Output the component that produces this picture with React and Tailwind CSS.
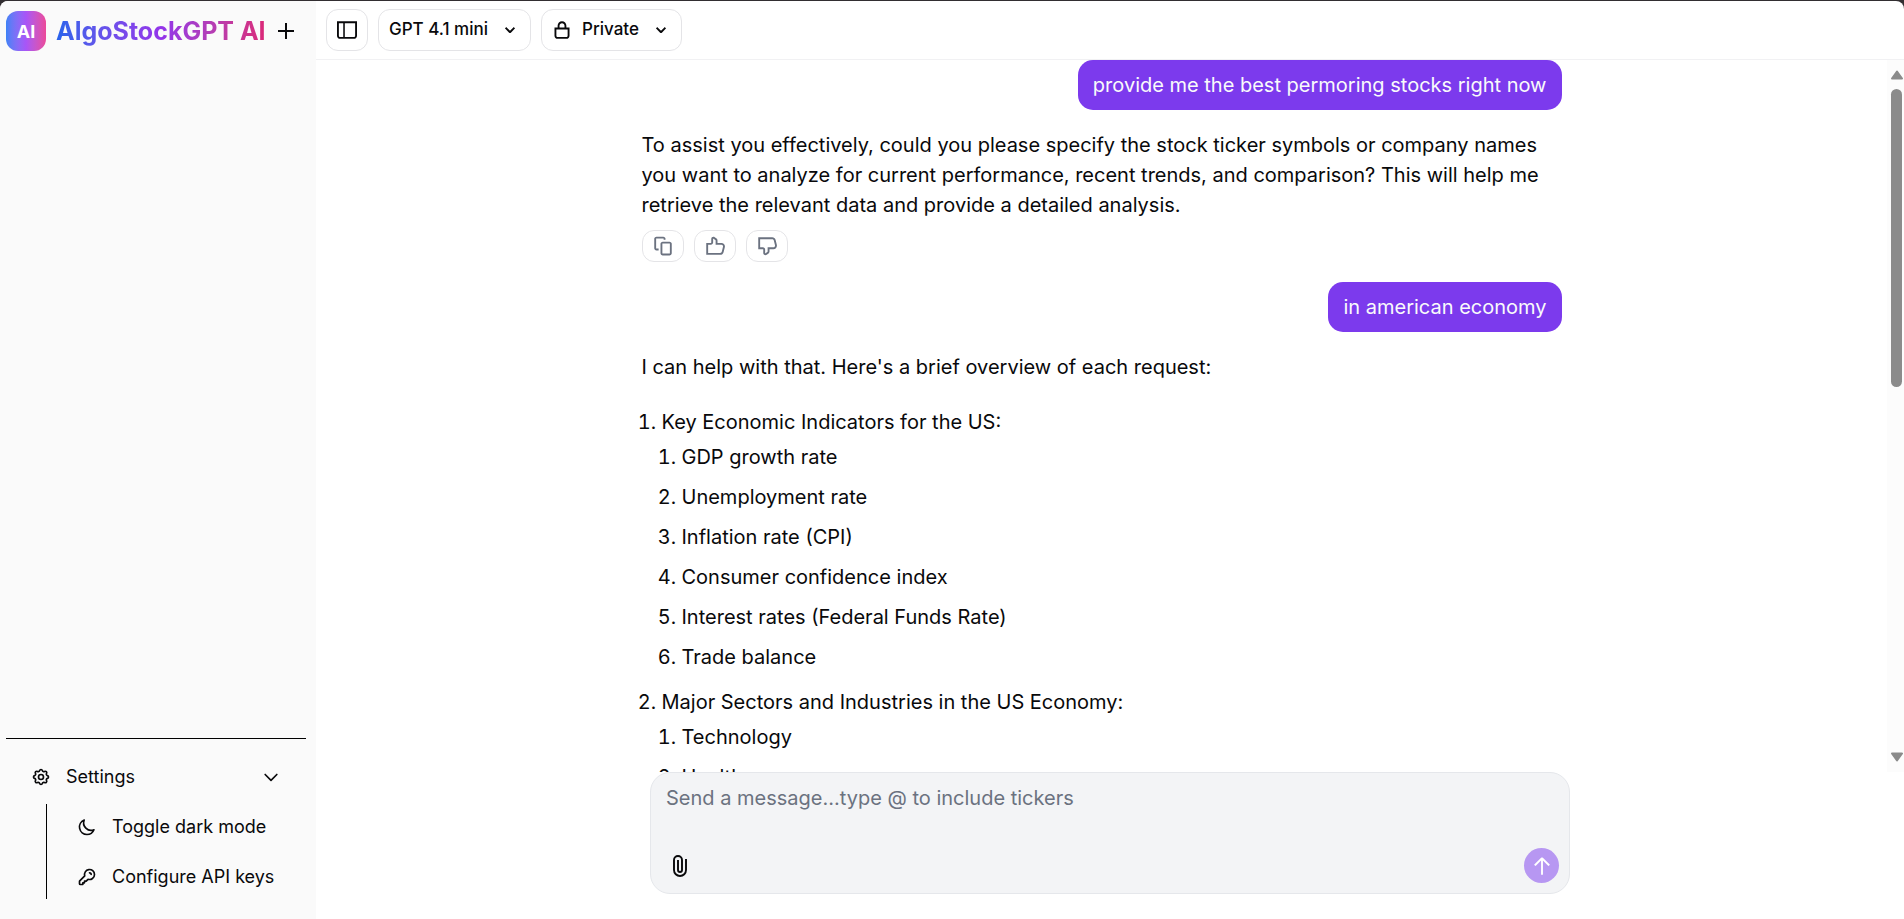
import { HiOutlineChevronDown, HiOutlineKey, HiOutlineMoon, HiOutlineCog } from "react-icons/hi";

function Glyph({ d, className }) {
  return (
    <svg viewBox="0 0 16 16" fill="currentColor" aria-hidden="true" className={className}>
      <path fillRule="evenodd" clipRule="evenodd" d={d} />
    </svg>
  );
}

const icons = {
  panel:
    "M6.245 2.5H14.5V12.5C14.5 13.0523 14.0523 13.5 13.5 13.5H6.245V2.5ZM4.995 2.5H1.5V12.5C1.5 13.0523 1.94772 13.5 2.5 13.5H4.995V2.5ZM0 1H1.5H14.5H16V2.5V12.5C16 13.8807 14.8807 15 13.5 15H2.5C1.11929 15 0 13.8807 0 12.5V2.5V1Z",
  lock:
    "M10 4.5V6H6V4.5C6 3.39543 6.89543 2.5 8 2.5C9.10457 2.5 10 3.39543 10 4.5ZM4.5 6V4.5C4.5 2.567 6.067 1 8 1C9.933 1 11.5 2.567 11.5 4.5V6H12.5H14V7.5V12.5C14 13.8807 12.8807 15 11.5 15H4.5C3.11929 15 2 13.8807 2 12.5V7.5V6H3.5H4.5ZM11.5 7.5H10H6H4.5H3.5V12.5C3.5 13.0523 3.94772 13.5 4.5 13.5H11.5C12.0523 13.5 12.5 13.0523 12.5 12.5V7.5H11.5Z",
  chevron:
    "M12.0607 6.74999L11.5303 7.28032L8.7071 10.1035C8.31657 10.4941 7.68341 10.4941 7.29288 10.1035L4.46966 7.28032L3.93933 6.74999L4.99999 5.68933L5.53032 6.21966L7.99999 8.68933L10.4697 6.21966L11 5.68933L12.0607 6.74999Z",
  copy:
    "M2.75 0.5C1.7835 0.5 1 1.2835 1 2.25V9.75C1 10.7165 1.7835 11.5 2.75 11.5H3.75H4.5V10H3.75H2.75C2.61193 10 2.5 9.88807 2.5 9.75V2.25C2.5 2.11193 2.61193 2 2.75 2H8.25C8.38807 2 8.5 2.11193 8.5 2.25V3H10V2.25C10 1.2835 9.2165 0.5 8.25 0.5H2.75ZM7.75 4.5C6.7835 4.5 6 5.2835 6 6.25V13.75C6 14.7165 6.7835 15.5 7.75 15.5H13.25C14.2165 15.5 15 14.7165 15 13.75V6.25C15 5.2835 14.2165 4.5 13.25 4.5H7.75ZM7.5 6.25C7.5 6.11193 7.61193 6 7.75 6H13.25C13.3881 6 13.5 6.11193 13.5 6.25V13.75C13.5 13.8881 13.3881 14 13.25 14H7.75C7.61193 14 7.5 13.8881 7.5 13.75V6.25Z",
  up:
    "M6.89531 2.23972C6.72984 2.12153 6.5 2.23981 6.5 2.44315V5.25001C6.5 6.21651 5.7165 7.00001 4.75 7.00001H2.5V13.5H12.1884C12.762 13.5 13.262 13.1096 13.4011 12.5532L14.4011 8.55318C14.5984 7.76425 14.0017 7.00001 13.1884 7.00001H9.25H8.5V6.25001V3.51458C8.5 3.43384 8.46101 3.35807 8.39531 3.31114L6.89531 2.23972ZM5 2.44315C5 1.01975 6.6089 0.191779 7.76717 1.01912L9.26717 2.09054C9.72706 2.41904 10 2.94941 10 3.51458V5.50001H13.1884C14.9775 5.50001 16.2903 7.18133 15.8563 8.91698L14.8563 12.917C14.5503 14.1412 13.4503 15 12.1884 15H1.75H1V14.25V6.25001V5.50001H1.75H4.75C4.88807 5.50001 5 5.38808 5 5.25001V2.44315Z",
  down:
    "M6.89531 13.7603C6.72984 13.8785 6.5 13.7602 6.5 13.5569V10.75C6.5 9.7835 5.7165 9 4.75 9H2.5V2.5H12.1884C12.762 2.5 13.262 2.89037 13.4011 3.44683L14.4011 7.44683C14.5984 8.23576 14.0017 9 13.1884 9H9.25H8.5V9.75V12.4854C8.5 12.5662 8.46101 12.6419 8.39531 12.6889L6.89531 13.7603ZM5 13.5569C5 14.9803 6.6089 15.8082 7.76717 14.9809L9.26717 13.9095C9.72706 13.581 10 13.0506 10 12.4854V10.5H13.1884C14.9775 10.5 16.2903 8.81868 15.8563 7.08303L14.8563 3.08303C14.5503 1.85882 13.4503 1 12.1884 1H1.75H1V1.75V9.75V10.5H1.75H4.75C4.88807 10.5 5 10.6119 5 10.75V13.5569Z",
  send:
    "M8.70711 1.39644C8.31659 1.00592 7.68342 1.00592 7.2929 1.39644L2.21968 6.46966L1.68935 6.99999L2.75001 8.06065L3.28034 7.53032L7.25001 3.56065V14.25V15H8.75001V14.25V3.56065L12.7197 7.53032L13.25 8.06065L14.3107 6.99999L13.7803 6.46966L8.70711 1.39644Z",
};

const sections = [
  {
    title: "Key Economic Indicators for the US:",
    items: [
      "GDP growth rate",
      "Unemployment rate",
      "Inflation rate (CPI)",
      "Consumer confidence index",
      "Interest rates (Federal Funds Rate)",
      "Trade balance",
    ],
  },
  {
    title: "Major Sectors and Industries in the US Economy:",
    items: ["Technology", "Healthcare"],
  },
];

function Sidebar() {
  return (
    <aside className="flex w-[316px] shrink-0 flex-col bg-[#fafafa] px-[6px]">
      <div className="flex items-center pt-[10px]">
        <div className="flex size-10 items-center justify-center rounded-xl bg-linear-to-r from-[#3b82f6] via-[#a855f7] to-[#ec4899] text-[18px] font-bold text-white">
          AI
        </div>
        <h1 className="ml-[10px] bg-linear-to-r from-[#2563eb] via-[#9333ea] to-[#db2777] bg-clip-text text-[25px] leading-[35px] font-bold whitespace-nowrap text-transparent">
          AlgoStockGPT AI
        </h1>
        <button type="button" aria-label="New chat" className="ml-[10px] flex size-5 items-center justify-center">
          <svg viewBox="0 0 16 16" stroke="currentColor" strokeWidth="2" className="size-4">
            <path d="M8 0V16M0 8H16" />
          </svg>
        </button>
      </div>
      <nav className="mt-auto mr-1 flex flex-col gap-[5px] border-t border-black pt-[15px] pb-5 text-[18px]">
        <button type="button" className="flex h-[45px] w-full items-center px-[25px] text-left">
          <HiOutlineCog className="size-5" />
          <span className="ml-[15px] flex-1">Settings</span>
          <HiOutlineChevronDown className="size-5" />
        </button>
        <div className="ml-10 flex flex-col gap-[5px] border-l border-black">
          <button type="button" className="flex h-[45px] w-full items-center pl-[30px] text-left">
            <HiOutlineMoon className="size-5" />
            <span className="ml-[15px]">Toggle dark mode</span>
          </button>
          <button type="button" className="flex h-[45px] w-full items-center pl-[30px] text-left">
            <HiOutlineKey className="size-5" />
            <span className="ml-[15px]">Configure API keys</span>
          </button>
        </div>
      </nav>
    </aside>
  );
}

function Header() {
  return (
    <header className="flex items-center gap-[10px] border-b border-[#f1f1f3] px-[10px] py-2 text-[17px] font-medium">
      <button type="button" aria-label="Toggle sidebar" className="flex size-[42px] items-center justify-center rounded-xl border border-[#e4e4e7]">
        <Glyph d={icons.panel} className="size-5" />
      </button>
      <button type="button" className="flex h-[42px] items-center rounded-xl border border-[#e4e4e7] px-[10px]">
        GPT 4.1 mini
        <Glyph d={icons.chevron} className="ml-3 size-5" />
      </button>
      <button type="button" className="flex h-[42px] items-center rounded-xl border border-[#e4e4e7] px-[10px]">
        <Glyph d={icons.lock} className="mr-[10px] size-5" />
        Private
        <Glyph d={icons.chevron} className="ml-3 size-5" />
      </button>
    </header>
  );
}

function UserMessage({ children }) {
  return (
    <p className="self-end rounded-[15px] bg-[#7c3aed] px-[15px] py-[10px] text-[#f9fafb]">{children}</p>
  );
}

function FeedbackButton({ label, d }) {
  return (
    <button type="button" aria-label={label} className="flex h-8 w-[42px] items-center justify-center rounded-xl border border-[#e4e4e7] text-[#6b7280]">
      <Glyph d={d} className="size-5" />
    </button>
  );
}

function Scrollbar() {
  return (
    <div aria-hidden="true" className="flex w-[17px] shrink-0 flex-col items-center bg-[#fcfcfc] py-[10px] pl-[2px] text-[#8b8b8b]">
      <svg viewBox="0 0 12 10" fill="currentColor" stroke="currentColor" strokeWidth="2" strokeLinejoin="round" className="h-[10px] w-3">
        <path d="M6 1.5L11 8.5H1Z" />
      </svg>
      <div className="mt-[9px] h-[298px] w-[11px] rounded-full bg-[#8b8b8b]" />
      <svg viewBox="0 0 12 10" fill="currentColor" stroke="currentColor" strokeWidth="2" strokeLinejoin="round" className="mt-auto h-[10px] w-3">
        <path d="M6 8.5L11 1.5H1Z" />
      </svg>
    </div>
  );
}

function Conversation() {
  return (
    <div className="flex min-h-0 flex-1">
      <div className="min-w-0 flex-1 overflow-hidden">
        <div className="mx-auto flex max-w-[960px] flex-col gap-5 px-5 text-[20px] leading-[30px]">
          <UserMessage>provide me the best permoring stocks right now</UserMessage>
          <div className="flex flex-col gap-[10px]">
            <p>
              To assist you effectively, could you please specify the stock ticker symbols or company names you want to
              analyze for current performance, recent trends, and comparison? This will help me retrieve the relevant
              data and provide a detailed analysis.
            </p>
            <div className="flex gap-[10px]">
              <FeedbackButton label="Copy" d={icons.copy} />
              <FeedbackButton label="Upvote response" d={icons.up} />
              <FeedbackButton label="Downvote response" d={icons.down} />
            </div>
          </div>
          <UserMessage>in american economy</UserMessage>
          <p>I can help with that. Here's a brief overview of each request:</p>
          <ol className="ml-5 list-outside list-decimal">
            {sections.map((section) => (
              <li key={section.title} className="py-[5px]">
                {section.title}
                <ol className="ml-5 list-outside list-decimal">
                  {section.items.map((item) => (
                    <li key={item} className="py-[5px]">
                      {item}
                    </li>
                  ))}
                </ol>
              </li>
            ))}
          </ol>
        </div>
      </div>
      <Scrollbar />
    </div>
  );
}

function Composer() {
  return (
    <form className="mx-auto w-full max-w-[960px] px-5 pb-[25px]">
      <div className="flex flex-col rounded-[20px] border border-[#e5e7eb] bg-[#f3f4f6] px-[10px] pb-[10px]">
        <textarea
          aria-label="Message"
          rows={2}
          placeholder="Send a message...type @ to include tickers"
          className="h-[75px] w-full resize-none bg-transparent px-[5px] pt-[10px] text-[20px] leading-[30px] outline-none placeholder:text-[#6b7280]"
        />
        <div className="flex h-[35px] items-center justify-between">
          <button type="button" aria-label="Attach file" className="flex size-[38px] items-center justify-center">
            <svg viewBox="0 0 14 22" fill="none" stroke="currentColor" strokeWidth="1.9" className="h-[22px] w-[14px]">
              <path d="M13 4V15A6 6 0 0 1 1 15V5A4 4 0 0 1 9 5V15A2 2 0 0 1 5 15V5" />
            </svg>
          </button>
          <button type="submit" aria-label="Send" className="flex size-[35px] items-center justify-center rounded-full bg-[#b797f2] text-white">
            <Glyph d={icons.send} className="size-5" />
          </button>
        </div>
      </div>
    </form>
  );
}

export default function App() {
  return (
    <div className="h-screen bg-[#322e31] pt-px font-['Inter',sans-serif] text-[#09090b]">
      <div className="flex h-full overflow-hidden rounded-t-lg bg-white">
        <Sidebar />
        <main className="flex min-w-0 flex-1 flex-col">
          <Header />
          <Conversation />
          <Composer />
        </main>
      </div>
    </div>
  );
}
